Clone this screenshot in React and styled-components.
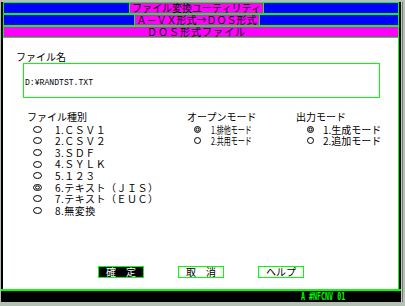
import React from 'react';
import styled, { createGlobalStyle } from 'styled-components';

const GlobalStyle = createGlobalStyle`
  html, body {
    margin: 0;
    padding: 0;
  }
  body {
    width: 405px;
    height: 306px;
    overflow: hidden;
    background: #b4c0b4;
    font-family: "Noto Sans CJK JP", sans-serif;
    color: #000;
  }
`;

const Frame = styled.div`
  margin: 2px 0 0 1px;
  width: 400px;
  height: 300px;
  background: #000;
  display: flex;
  flex-direction: column;
  box-shadow: 1px 0 0 #c8c8c8, 2px 0 0 #787878;
`;

const Client = styled.div`
  margin-left: 2px;
  width: 396px;
  height: 287px;
  box-sizing: border-box;
  border-right: 1px solid #00ff00;
  background: #fff;
  display: flex;
  flex-direction: column;
`;

const Bar = styled.div`
  height: 12px;
  box-sizing: border-box;
  border: 1px solid #00ff00;
  border-right: none;
  background: ${p => p.$bg};
  display: flex;
  justify-content: center;
  padding-right: 9px;
`;

const TitleBox = styled.div`
  background: #ff00ff;
  border-left: ${p => (p.$plain ? 'none' : '1px solid #00ff00')};
  border-right: ${p => (p.$plain ? 'none' : '1px solid #00ff00')};
  padding: 0 2px;
  font-size: 10px;
  line-height: 10px;
  letter-spacing: ${p => p.$spacing || '0px'};
  white-space: nowrap;
`;

const Body = styled.div`
  flex: 1;
  display: flex;
  flex-direction: column;
`;

const FieldLabel = styled.div`
  margin: 13px 0 0 13px;
  font-size: 10px;
  line-height: 12px;
`;

const FileBox = styled.div`
  margin-left: 20px;
  width: 357px;
  height: 35px;
  box-sizing: border-box;
  border: 1px solid #00ff00;
  padding: 2px 1px;
`;

const FileText = styled.span`
  display: inline-block;
  font-family: "Liberation Mono", monospace;
  font-size: 9px;
  line-height: 10px;
  transform: scaleX(0.9);
  transform-origin: left top;
  white-space: pre;
`;

const Options = styled.div`
  display: grid;
  grid-template-columns: 160px 109px 1fr;
  margin-top: 13px;
  padding-left: 24px;
`;

const Group = styled.div`
  display: flex;
  flex-direction: column;
`;

const GroupLabel = styled.div`
  font-size: 10px;
  line-height: 12.6px;
  white-space: nowrap;
`;

const Item = styled.div`
  display: flex;
  align-items: center;
  height: 11.6px;
  padding-left: ${p => p.$indent}px;
`;

const Mark = styled.span`
  flex: none;
  display: flex;
  align-items: center;
  width: ${p => p.$w}px;
  height: 11.6px;
  padding-left: 1px;
  box-sizing: border-box;
`;

const ItemText = styled.span`
  display: inline-block;
  font-size: 10px;
  line-height: 11.6px;
  letter-spacing: ${p => p.$spacing || '0px'};
  white-space: nowrap;
  transform: scaleX(${p => p.$squeeze || 1});
  transform-origin: left center;
`;

const ButtonRow = styled.div`
  margin-top: auto;
  margin-bottom: 11px;
  padding-left: 95px;
  display: flex;
  gap: 34px;
`;

const Button = styled.div`
  width: 46px;
  height: 12px;
  box-sizing: border-box;
  border: 1px solid #00ff00;
  background: ${p => (p.$primary ? '#000' : '#fff')};
  color: ${p => (p.$primary ? '#fff' : '#000')};
  font-size: 10px;
  line-height: 10px;
  text-align: center;
  white-space: pre;
`;

const StatusBar = styled.div`
  height: 11px;
  border-top: 2px solid #00ff00;
  background: #000;
  padding-left: 300px;
  display: flex;
  align-items: center;
`;

const StatusText = styled.span`
  display: inline-block;
  font-family: "DejaVu Sans Mono", monospace;
  font-size: 10px;
  line-height: 11px;
  font-weight: bold;
  color: #00ff00;
  transform: scaleX(0.667);
  transform-origin: left center;
  white-space: pre;
`;

// radio indicator: ○ / ◎ drawn as a small ellipse
const Radio = ({ on, w, h }) => (
  <svg width={w} height={h} viewBox={`0 0 ${w} ${h}`}>
    <ellipse
      cx={w / 2}
      cy={h / 2}
      rx={w / 2 - 0.5}
      ry={h / 2 - 0.5}
      fill="none"
      stroke="#000"
      strokeWidth="1"
    />
    {on && (
      <ellipse
        cx={w / 2}
        cy={h / 2}
        rx={w / 4 - 0.2}
        ry={h / 4 - 0.2}
        fill="none"
        stroke="#000"
        strokeWidth="1"
      />
    )}
  </svg>
);

const fileTypes = [
  '1.ＣＳＶ１',
  '2.ＣＳＶ２',
  '3.ＳＤＦ',
  '4.ＳＹＬＫ',
  '5.１２３',
  '6.テキスト（ＪＩＳ）',
  '7.テキスト（ＥＵＣ）',
  '8.無変換',
];

const groups = [
  {
    label: 'ファイル種別',
    items: fileTypes,
    selected: 5,
    indent: 5,
    markW: 23,
    radio: [9, 7],
    spacing: '0.5px',
  },
  {
    label: 'オープンモード',
    items: ['1.排他モード', '2.共用モード'],
    selected: 0,
    indent: 6,
    markW: 18,
    radio: [7, 7],
    squeeze: 0.7,
  },
  {
    label: '出力モード',
    items: ['1.生成モード', '2.追加モード'],
    selected: 0,
    indent: 10,
    markW: 17,
    radio: [7, 7],
  },
];

export default function App() {
  return (
    <>
      <GlobalStyle />
      <Frame>
        <Client>
          <Bar $bg="#0000ff">
            <TitleBox>ファイル変換ユーティリティ</TitleBox>
          </Bar>
          <Bar $bg="#0000ff">
            <TitleBox>Ａ－ＶＸ形式→ＤＯＳ形式</TitleBox>
          </Bar>
          <Bar $bg="#ff00ff">
            <TitleBox $plain $spacing="1px">ＤＯＳ形式ファイル</TitleBox>
          </Bar>

          <Body>
            <FieldLabel>ファイル名</FieldLabel>
            <FileBox>
              <FileText>D:¥RANDTST.TXT</FileText>
            </FileBox>

            <Options>
              {groups.map(g => (
                <Group key={g.label}>
                  <GroupLabel>{g.label}</GroupLabel>
                  {g.items.map((it, i) => (
                    <Item key={it} $indent={g.indent}>
                      <Mark $w={g.markW}>
                        <Radio on={i === g.selected} w={g.radio[0]} h={g.radio[1]} />
                      </Mark>
                      <ItemText $spacing={g.spacing} $squeeze={g.squeeze}>
                        {it}
                      </ItemText>
                    </Item>
                  ))}
                </Group>
              ))}
            </Options>

            <ButtonRow>
              <Button $primary>確　定</Button>
              <Button>取　消</Button>
              <Button>ヘルプ</Button>
            </ButtonRow>
          </Body>
        </Client>
        <StatusBar>
          <StatusText>A #NFCNV 01</StatusText>
        </StatusBar>
      </Frame>
    </>
  );
}
